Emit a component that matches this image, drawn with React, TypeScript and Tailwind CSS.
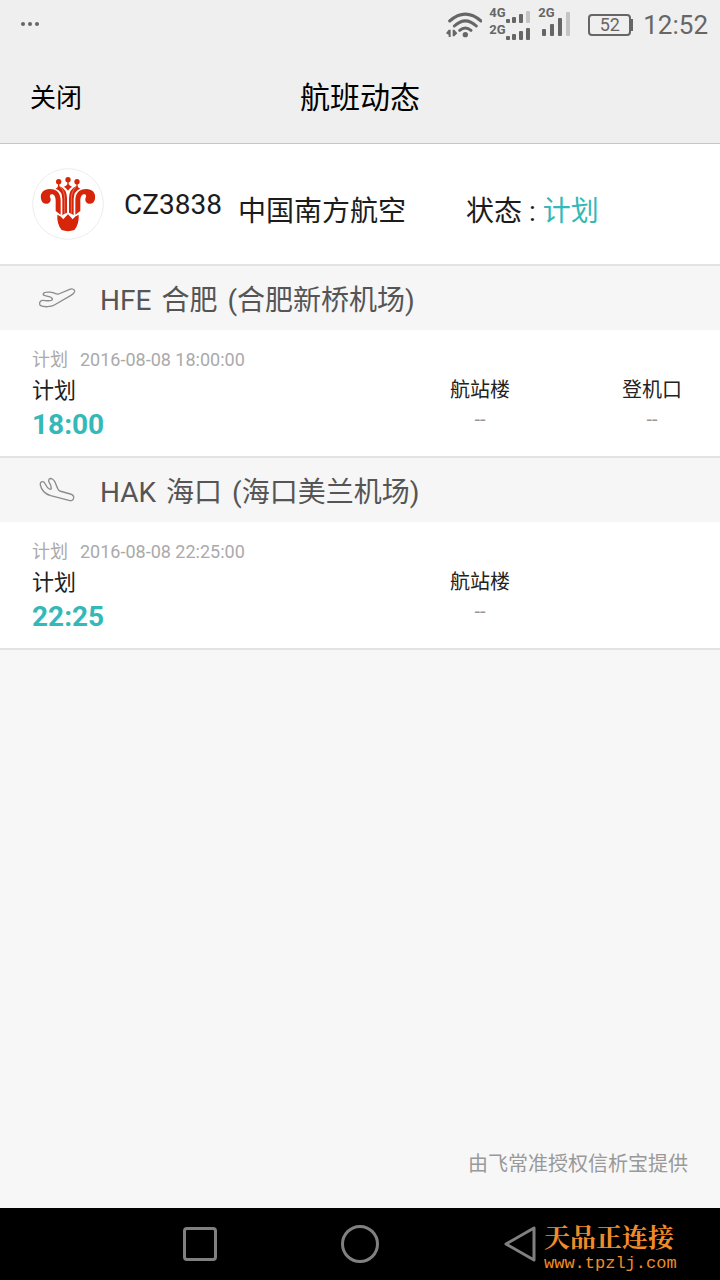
import React from "react";

type Leg = {
  kind: "departure" | "arrival";
  code: string;
  city: string;
  airport: string;
  planned: string;
  time: string;
  details: { label: string; value: string }[];
};

const legs: Leg[] = [
  {
    kind: "departure",
    code: "HFE",
    city: "合肥",
    airport: "合肥新桥机场",
    planned: "2016-08-08 18:00:00",
    time: "18:00",
    details: [
      { label: "航站楼", value: "--" },
      { label: "登机口", value: "--" },
    ],
  },
  {
    kind: "arrival",
    code: "HAK",
    city: "海口",
    airport: "海口美兰机场",
    planned: "2016-08-08 22:25:00",
    time: "22:25",
    details: [{ label: "航站楼", value: "--" }],
  },
];

function WifiIcon() {
  return (
    <svg className="h-7 w-9" viewBox="24 30 108 84" fill="none" stroke="#666" aria-hidden="true">
      <path d="M35 60 Q82 19 129 60" strokeWidth="9" strokeLinecap="round" />
      <path d="M49 75 Q82 44 115 75" strokeWidth="9" strokeLinecap="round" />
      <path d="M65 88 Q82 74 99 88" strokeWidth="9" strokeLinecap="round" />
      <circle cx="82" cy="101" r="8" fill="#666" stroke="none" />
      <path d="M32 86 H38 V108 H32 V101 L24 97 Z M44 86 H49 L58 97 L49 106 H44 Z" fill="#666" stroke="none" />
    </svg>
  );
}

function SmallBars({ weak }: { weak?: boolean }) {
  return (
    <svg className="h-3 w-6" viewBox="0 0 24 12" fill="#666" aria-hidden="true">
      <rect x="0" y="8" width="4" height="4" rx="1" />
      <rect x="6" y="6" width="4" height="6" rx="1" />
      <rect x="13" y="3" width="4" height="9" rx="1" />
      <rect x="20" y="0" width="4" height="12" rx="1" fill={weak ? "#c4c4c4" : "#666"} />
    </svg>
  );
}

function StatusBar() {
  return (
    <div className="flex h-[50px] items-center justify-between pr-3 pl-5 text-[#666]">
      <svg className="h-5 w-5" viewBox="0 0 20 20" fill="#666" aria-hidden="true">
        <circle cx="3" cy="9" r="2" />
        <circle cx="10" cy="9" r="2" />
        <circle cx="17" cy="9" r="2" />
      </svg>
      <div className="flex items-center">
        <WifiIcon />
        <div className="ml-[7px] flex flex-col gap-px pb-1 text-[13px] leading-3 font-bold">
          <div className="flex items-end">
            <span className="w-[17px] pb-1">4G</span>
            <SmallBars weak />
          </div>
          <div className="flex items-end">
            <span className="w-[17px] pb-1">2G</span>
            <SmallBars />
          </div>
        </div>
        <div className="relative ml-3 h-7 w-7">
          <span className="absolute -top-1 -left-1 text-[13px] leading-3 font-bold">2G</span>
          <svg className="h-7 w-7" viewBox="0 0 28 28" fill="#666" aria-hidden="true">
            <rect x="0" y="18" width="4" height="7" rx="1" />
            <rect x="8" y="13" width="4" height="12" rx="1" />
            <rect x="16" y="7" width="4" height="18" rx="1" />
            <rect x="24" y="1" width="4" height="24" rx="1" fill="#c4c4c4" />
          </svg>
        </div>
        <div className="ml-[18px] flex items-center">
          <span className="flex h-[22px] w-[43px] items-center justify-center rounded border-2 border-[#666] text-lg leading-none">
            52
          </span>
          <span className="h-3 w-0.5 bg-[#666]" />
        </div>
        <span className="ml-2.5 text-[26px] leading-none">12:52</span>
      </div>
    </div>
  );
}

function AirlineLogo() {
  return (
    <svg className="h-[72px] w-[72px] shrink-0" viewBox="36 39 216 216" role="img" aria-label="中国南方航空">
      <circle cx="144" cy="147" r="106" fill="#fff" stroke="#e2e2e2" strokeWidth="2" />
      <g fill="#d62508">
        <circle cx="144" cy="74" r="8" />
        <circle cx="116" cy="80" r="8" />
        <circle cx="171" cy="80" r="8" />
        <path d="M142 80 H146 V88 Q150 94 156 95 Q149 100 144 107 Q139 100 132 95 Q139 94 142 88 Z" />
        <path d="M63 131 C60 113 72 102 89 102 C111 102 122 115 122 137 V179 L107 168 V137 C107 124 101 116 94 118 C87 120 90 126 92 132 C93 142 85 147 77 146 C69 145 64 139 63 131 Z" />
        <path d="M225 131 C228 113 216 102 199 102 C177 102 166 115 166 137 V179 L181 168 V137 C181 124 187 116 194 118 C201 120 198 126 196 132 C195 142 203 147 211 146 C219 145 224 139 225 131 Z" />
        <path d="M114 84 H118 V93 Q141 102 141 130 V173 L127 180 V132 Q127 108 107 101 Q114 98 114 92 Z" />
        <path d="M173 84 H169 V93 Q147 102 147 130 V173 L161 180 V132 Q161 108 181 101 Q173 98 173 92 Z" />
        <path d="M112 179 Q123 182 130 193 Q136 186 144 178 Q152 186 158 193 Q165 182 176 179 Q178 207 163 225 Q144 232 125 225 Q110 207 112 179 Z" />
      </g>
      <path d="M120 95 Q134 108 134 133 V176 M168 95 Q154 108 154 133 V176" fill="none" stroke="#fff" strokeWidth="1" />
    </svg>
  );
}

function PlaneIcon({ kind }: { kind: Leg["kind"] }) {
  return kind === "departure" ? (
    <svg className="h-6 w-[38px]" viewBox="54 51 114 72" fill="none" stroke="#8c8c8c" strokeWidth="4" strokeLinejoin="round" aria-hidden="true">
      <path d="M116 75 L149 61 C157 58 165 61 164 68 C163 73 158 76 153 79 L103 108 C94 114 72 115 62 110 C57 107 58 98 64 95 C70 92 83 98 94 94 C101 91 96 86 88 83 C77 79 67 81 70 74 C73 67 83 69 94 70 C104 71 108 77 116 75 Z" />
    </svg>
  ) : (
    <svg className="h-[26px] w-[38px]" viewBox="54 81 114 78" fill="none" stroke="#8c8c8c" strokeWidth="4" strokeLinejoin="round" aria-hidden="true">
      <path d="M119 123 L151 132 C158 134 162 138 161 144 C160 151 154 153 147 151 L92 137 C75 132 64 119 61 105 C60 98 63 94 69 95 C77 97 77 112 88 117 C96 120 94 114 92 106 C90 98 82 94 87 88 C93 82 101 88 106 98 C111 109 112 120 119 123 Z" />
    </svg>
  );
}

function LegSection({ leg }: { leg: Leg }) {
  return (
    <section className="border-b-2 border-[#e3e3e3]">
      <h2 className="flex h-16 items-center bg-[#f6f6f6] pl-[38px] text-[28px] leading-10 text-[#555]">
        <PlaneIcon kind={leg.kind} />
        <span className="ml-6 flex gap-2.5 pt-1.5">
          <span>{leg.code}</span>
          <span>{leg.city}</span>
          <span>({leg.airport})</span>
        </span>
      </h2>
      <div className="flex h-[126px] items-start bg-white pl-8">
        <div className="flex-1 pt-[17px]">
          <p className="flex gap-3 text-lg leading-[26px] text-[#aaa]">
            <span>计划</span>
            <span>{leg.planned}</span>
          </p>
          <p className="text-[22px] leading-9 text-[#222]">计划</p>
          <p className="text-[28px] leading-8 font-bold text-[#35b8b8]">{leg.time}</p>
        </div>
        <dl className="grid w-[326px] grid-cols-[172px_1fr] pt-[45px]">
          {leg.details.map((detail) => (
            <div key={detail.label} className="w-[172px] text-center">
              <dt className="text-xl leading-[30px] text-[#222]">{detail.label}</dt>
              <dd className="text-xl leading-7 text-[#999]">{detail.value}</dd>
            </div>
          ))}
        </dl>
      </div>
    </section>
  );
}

function SystemNav() {
  return (
    <nav className="relative flex h-[72px] items-center justify-center gap-[120px] bg-black">
      <button type="button" aria-label="最近任务" className="flex h-10 w-10 items-center justify-center">
        <span className="h-[34px] w-[34px] rounded border-3 border-[#808080]" />
      </button>
      <button type="button" aria-label="主屏幕" className="flex h-10 w-10 items-center justify-center">
        <span className="h-[38px] w-[38px] rounded-full border-3 border-[#808080]" />
      </button>
      <button type="button" aria-label="返回" className="flex h-10 w-10 items-center justify-center">
        <svg className="h-10 w-10" viewBox="0 0 40 40" fill="none" stroke="#808080" strokeWidth="3" strokeLinejoin="round" aria-hidden="true">
          <path d="M34 4 V36 L6 20 Z" />
        </svg>
      </button>
      <div className="absolute top-4 right-10 w-[136px] text-[#f08c28]">
        <p className="font-['Liberation_Serif','Noto_Serif_CJK_SC','Noto_Sans_CJK_SC',serif] text-[26px] leading-[30px] font-bold whitespace-nowrap">
          天品正连接
        </p>
        <p className="font-['Liberation_Mono',monospace] text-[17px] leading-5">www.tpzlj.com</p>
      </div>
    </nav>
  );
}

export default function App() {
  return (
    <div lang="zh-CN" className="flex min-h-screen flex-col bg-[#f7f7f7] font-['Roboto','Noto_Sans_CJK_SC',sans-serif]">
      <header className="border-b border-[#c6c6c6] bg-[#efefef] text-black">
        <StatusBar />
        <div className="grid h-[93px] grid-cols-3 items-center px-[30px] pt-0.5">
          <button type="button" className="justify-self-start text-[26px] leading-10">关闭</button>
          <h1 className="text-center text-[30px] leading-10">航班动态</h1>
        </div>
      </header>
      <main className="flex flex-1 flex-col">
        <div className="flex h-[122px] items-center border-b-2 border-[#e3e3e3] bg-white pl-8 text-[28px] leading-10 text-[#1c1c1c]">
          <AirlineLogo />
          <span className="ml-5 pt-0.5">CZ3838</span>
          <span className="ml-4 pt-4">中国南方航空</span>
          <span className="ml-[60px] pt-4">
            状态 : <span className="text-[#35b8b8]">计划</span>
          </span>
        </div>
        {legs.map((leg) => (
          <LegSection key={leg.code} leg={leg} />
        ))}
        <footer className="mt-auto pr-8 pb-[29px] text-right text-xl leading-[30px] text-[#999]">
          由飞常准授权信析宝提供
        </footer>
      </main>
      <SystemNav />
    </div>
  );
}
